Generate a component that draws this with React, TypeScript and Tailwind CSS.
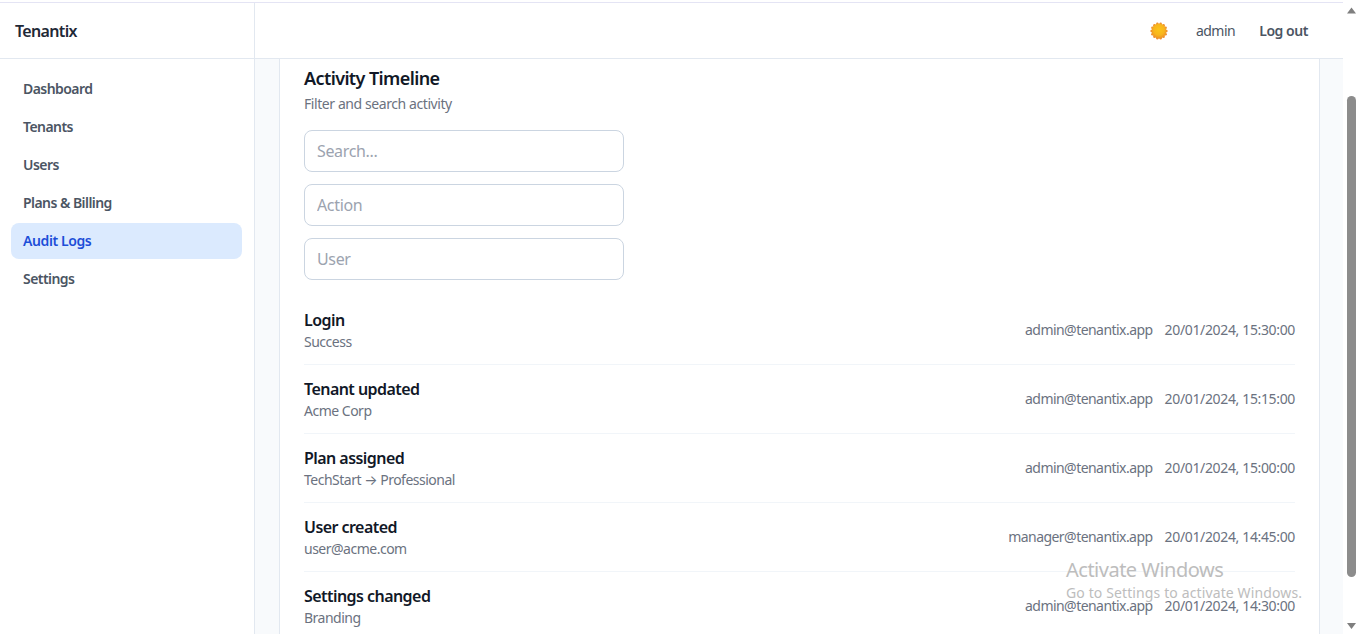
import type { ReactNode } from 'react'

const navItems = [
  { label: 'Dashboard' },
  { label: 'Tenants' },
  { label: 'Users' },
  { label: 'Plans & Billing' },
  { label: 'Audit Logs', active: true },
  { label: 'Settings' },
]

const logs: { title: string; detail: ReactNode; user: string; time: string }[] = [
  { title: 'Login', detail: 'Success', user: 'admin@tenantix.app', time: '20/01/2024, 15:30:00' },
  { title: 'Tenant updated', detail: 'Acme Corp', user: 'admin@tenantix.app', time: '20/01/2024, 15:15:00' },
  {
    title: 'Plan assigned',
    detail: (
      <>
        TechStart <span className="font-['Inter',sans-serif]">→</span> Professional
      </>
    ),
    user: 'admin@tenantix.app',
    time: '20/01/2024, 15:00:00',
  },
  { title: 'User created', detail: 'user@acme.com', user: 'manager@tenantix.app', time: '20/01/2024, 14:45:00' },
  { title: 'Settings changed', detail: 'Branding', user: 'admin@tenantix.app', time: '20/01/2024, 14:30:00' },
]

const sunTeeth = Array.from({ length: 14 }, (_, i) => (i * Math.PI * 2) / 14)

function SunIcon() {
  return (
    <svg width="18" height="18" viewBox="0 0 18 18">
      <defs>
        <radialGradient id="sun" cx="50%" cy="42%" r="58%">
          <stop offset="0%" stopColor="#fcc419" />
          <stop offset="60%" stopColor="#f8b61d" />
          <stop offset="100%" stopColor="#ee9128" />
        </radialGradient>
      </defs>
      {sunTeeth.map((a) => (
        <circle key={a} cx={9 + 7.4 * Math.cos(a)} cy={9 + 7.4 * Math.sin(a)} r="1.2" fill="#ee8f30" />
      ))}
      <circle cx="9" cy="9" r="7.5" fill="url(#sun)" />
    </svg>
  )
}

function Scrollbar() {
  return (
    <div className="flex w-[15px] shrink-0 flex-col items-center bg-white">
      <svg width="15" height="17" viewBox="0 0 15 17" className="shrink-0">
        <path d="M8.5 7.5 L13 13.5 L4 13.5 Z" fill="#7f7f7f" />
      </svg>
      <div className="mt-[79px] ml-[2px] h-[481px] w-[9px] shrink-0 rounded-full bg-[#8c8c8c]" />
      <div className="flex-1" />
      <svg width="15" height="17" viewBox="0 0 15 17" className="shrink-0">
        <path d="M4 6 L13 6 L8.5 12 Z" fill="#7f7f7f" />
      </svg>
    </div>
  )
}

export default function App() {
  return (
    <div className="relative flex h-[634px] w-[1358px] overflow-hidden bg-white font-['Noto_Sans',sans-serif] text-[#111827]">
      <div className="flex min-w-0 flex-1 flex-col">
        <div className="h-[3px] shrink-0 border-b border-[#e4e4f4]" />
        <div className="flex min-h-0 flex-1">
          {/* sidebar */}
          <aside className="flex w-[255px] shrink-0 flex-col border-r border-[#e2e8f0] bg-white">
            <div className="flex h-[56px] shrink-0 items-center border-b border-[#e2e8f0] px-[15px] text-base font-semibold tracking-[-0.65px] text-[#1f2937]">
              Tenantix
            </div>
            <nav className="flex flex-col gap-0.5 pl-[11px] pr-3 py-3">
              {navItems.map((item) => (
                <a
                  key={item.label}
                  className={
                    item.active
                      ? 'flex h-9 items-center rounded-lg bg-[#dbeafe] px-3 text-sm font-semibold tracking-[-0.4px] text-[#1d4ed8]'
                      : 'flex h-9 items-center rounded-lg px-3 text-sm font-semibold tracking-[-0.55px] text-[#4b5563]'
                  }
                >
                  {item.label}
                </a>
              ))}
            </nav>
          </aside>

          <div className="flex min-w-0 flex-1 flex-col">
            {/* header */}
            <header className="flex h-[56px] shrink-0 items-center justify-end border-b border-[#e2e8f0] bg-white pr-[35px]">
              <SunIcon />
              <span className="ml-7 text-sm tracking-[-0.5px] text-[#4b5563]">admin</span>
              <button className="ml-6 text-sm font-semibold tracking-[-0.45px] text-[#4b5563]">Log out</button>
            </header>

            {/* content */}
            <main className="min-h-0 flex-1 overflow-hidden bg-[#f8fafc] pl-6 pr-[23px]">
              <section className="border-x border-[#e2e8f0] bg-white px-6 pt-[5px]">
                <h2 className="text-lg font-semibold tracking-[-0.6px] text-[#111827]">Activity Timeline</h2>
                <p className="mt-[2px] text-sm tracking-[-0.42px] text-[#6b7280]">Filter and search activity</p>

                <div className="mt-4 flex w-80 flex-col gap-3">
                  {['Search...', 'Action', 'User'].map((placeholder) => (
                    <input
                      key={placeholder}
                      placeholder={placeholder}
                      className="h-[42px] rounded-lg border border-[#cbd5e1] bg-white px-3 text-base tracking-[-0.35px] outline-none placeholder:text-[#9ca3af]"
                    />
                  ))}
                </div>

                <div className="mt-4 flex flex-col">
                  {logs.map((log) => (
                    <div
                      key={log.title}
                      className="flex items-center justify-between border-b border-[#f1f5f9] py-3"
                    >
                      <div>
                        <div className="text-base font-semibold tracking-[-0.55px] text-[#111827]">{log.title}</div>
                        <div className="text-sm tracking-[-0.5px] text-[#6b7280]">{log.detail}</div>
                      </div>
                      <div className="flex gap-3 text-sm text-[#6b7280]">
                        <span className="tracking-[-0.55px]">{log.user}</span>
                        <span className="tracking-[-0.35px]">{log.time}</span>
                      </div>
                    </div>
                  ))}
                </div>
              </section>
            </main>
          </div>
        </div>
      </div>

      <Scrollbar />

      {/* windows watermark */}
      <div className="absolute left-[1066px] top-[558px] text-[#bdbdbd]">
        <div className="text-xl leading-6 tracking-[-0.5px]">Activate Windows</div>
        <div className="mt-px text-sm leading-5 tracking-[0.12px]">Go to Settings to activate Windows.</div>
      </div>
    </div>
  )
}
